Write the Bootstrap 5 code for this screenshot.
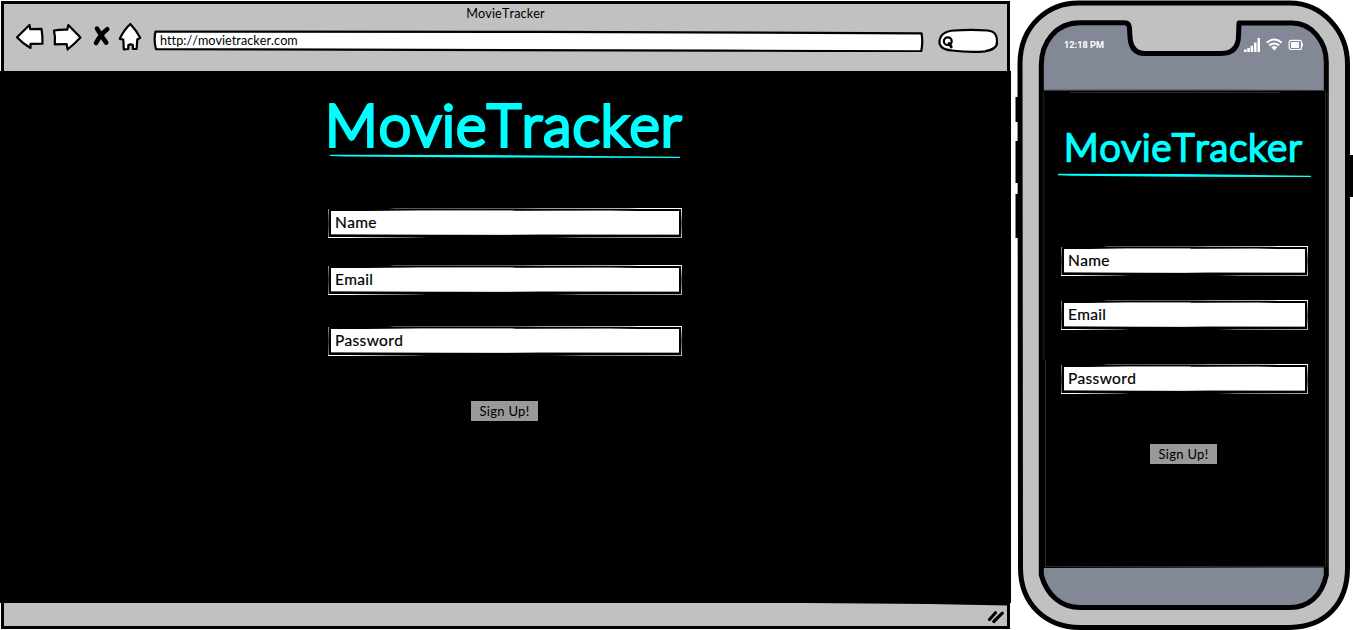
<!DOCTYPE html>
<html lang="en">
<head>
<meta charset="utf-8">
<meta name="viewport" content="width=device-width, initial-scale=1">
<title>MovieTracker</title>
<link href="https://cdn.jsdelivr.net/npm/bootstrap@5.3.0/dist/css/bootstrap.min.css" rel="stylesheet">
<style>
  body { width: 1353px; height: 630px; overflow: hidden; background: #fff; color: #000; font-family: Lato, "Open Sans", sans-serif; font-kerning: none; }
  svg { display: block; }
  .browser { width: 1011px; height: 630px; padding-top: 1px; }
  .chrome { height: 70px; margin: 0 1px 0 1px; background: #c1c1c1; border: 3px solid #000; border-bottom: 0; }
  .chrome-title { font-size: 12.6px; line-height: 20px; height: 18px; letter-spacing: .15px; }
  .chrome-nav { padding-left: 10px; height: 34px; }
  .page { height: 532px; background: #000; }
  .foot { height: 26px; margin: 0 1px; background: #c1c1c1; border: 3px solid #000; border-top: 0; }
  .address { width: 771px; height: 23px; margin: 7px 0 0 -1px; }
  .address span { left: 7px; top: 1px; font-size: 12.6px; line-height: 22px; letter-spacing: .04px; }
  .brand { color: #0ff; line-height: 1; font-weight: 300; white-space: nowrap; -webkit-text-stroke: 3.8px #0ff; }
  .brand-lg { font-size: 58px; height: 60px; margin: 24px 0 0 -3px; letter-spacing: 1px; }
  .brand-sm { font-size: 38px; height: 39px; margin: 36px 0 0 3px; letter-spacing: 1.05px; -webkit-text-stroke-width: 2.5px; }
  .rule-lg { margin-top: -2px; }
  .rule-sm { margin: 6px 0 0 -3px; }
  .field {
    height: 30px; padding: 0 0 0 7px; border: 0; border-radius: 0; color: #000;
    font-size: 15.5px; line-height: 28px; letter-spacing: .3px; -webkit-text-stroke: .2px #000;
    background:
      linear-gradient(#fff, #fff) 3px 3px / calc(100% - 6px) 23px no-repeat,
      linear-gradient(90deg, #000 10%, #999 26%, #999 52%, #333 53%, #777 80%, #000 88%) 3px 2px / calc(100% - 6px) 1px no-repeat,
      linear-gradient(90deg, #555, #bbb 30%, #ddd 50%, #888 60%, #aaa) 3px 26px / calc(100% - 6px) 1px no-repeat,
      linear-gradient(90deg, #000 17%, #555 19%, #666 54%, #999 60%, #bbb 85%, #fff 88%) 0 0 / 100% 1px no-repeat,
      linear-gradient(90deg, #fff 6%, #ccc 10%, #555 24%, #000 28%, #000 63%, #777 72%, #aaa) 0 29px / 100% 1px no-repeat,
      linear-gradient(#999, #333 50%, #888) 0 0 / 1px 100% no-repeat,
      linear-gradient(#fff, #555 50%, #ccc) 100% 0 / 1px 100% no-repeat,
      #000;
  }
  .sign { width: 67px; height: 20px; padding: 0; border: 0; border-radius: 0; background: #999 !important; color: #000 !important; font-size: 13px; line-height: 20px; letter-spacing: .3px; }
  .desk-form { width: 354px; margin-left: 328px; }
  .phone { width: 342px; height: 630px; }
  .shell { left: 0; top: 0; }
  .phone-ui { z-index: 1; height: 630px; }
  .status { height: 91px; padding: 37px 49px 0 53px; color: #fff; }
  .clock { font: 700 9.2px/15px Roboto, sans-serif; }
  .phone-form { width: 247px; margin-left: 50px; }
</style>
</head>
<body class="d-flex">
<main class="browser flex-shrink-0">
  <header class="chrome">
    <div class="chrome-title text-center">MovieTracker</div>
    <nav class="chrome-nav d-flex">
      <svg width="140" height="34" viewBox="14 22 140 34" fill="#fff" stroke="#000" stroke-width="2.200" stroke-linejoin="round" stroke-linecap="round">
        <path d="M17 37.300 29.500 25l.8 4.200 11.200-.3q1.200 7 1 14.800l-12 .1v4.200Q22.500 43.500 17 37.300Z"/>
        <path d="M54 30.500q6-1.200 13.300-.9L68.300 25 80.500 37.600Q75 43.500 67.600 49.500L66.600 44l-11.800.4Q55.500 37 54 30.500Z"/>
        <path d="M97 28.600Q101 35.500 106.200 42.600M107.200 29.200Q100 35 96 43" fill="none" stroke-width="4.600"/>
        <path d="M130.300 24Q136.500 30.500 140.200 37.800L137.300 39.500l-.7 9.500h-3.700v-3.800q-2.400-1.600-4.600 0v3.800l-4.500.5-.5-10L119.800 38.800Q123.500 30.500 130.300 24Z"/>
      </svg>
      <div class="address position-relative">
        <svg width="771" height="23" viewBox="153 29 771 23"><path d="M155.500 31.500Q350 30.800 540 31.800T921.500 33.300Q923.200 42 921.200 51.300L720 50.600Q430 50 156 49.200 153.500 40 155.500 31.500Z" fill="#fff" stroke="#000" stroke-width="2.200" stroke-linejoin="round"/></svg>
        <span class="position-absolute">http://movietracker.com</span>
      </div>
      <svg class="ms-1" width="73" height="36" viewBox="928 22 73 36" fill="none" stroke="#000" stroke-width="2.200" stroke-linecap="round">
        <path d="M952 50.500C941 49.500 939 45 939.500 41c.7-6 6-10 15-10.500q16-1.200 33 0c8 .8 9.500 5 9.500 11 .5 6-4 8.500-12 9.800-12 1.200-23 .4-33-.8Z" fill="#fff"/>
        <circle cx="947.800" cy="41.300" r="3.900"/><path d="m949 43.500 2.300 3.400" stroke-width="2.800"/>
      </svg>
    </nav>
  </header>

  <section class="page overflow-hidden">
    <div class="desk-form d-flex flex-column">
      <h1 class="brand brand-lg mb-0">MovieTracker</h1>
      <svg class="rule-lg" width="354" height="6" viewBox="328 153 354 6"><path d="M330 154.800 480 155 680 156.800V158L480 157.400 345 156.600 330 156Z" fill="#0ff"/></svg>
      <label class="field form-control" style="margin-top:49px">Name</label>
      <label class="field form-control" style="margin-top:27px">Email</label>
      <label class="field form-control" style="margin-top:31px">Password</label>
      <button class="btn sign" style="margin:45px 0 0 143px">Sign Up!</button>
    </div>
  </section>

  <footer class="foot d-flex justify-content-end">
    <svg width="200" height="23" viewBox="808 603 200 23">
      <path d="M808 603H1008V605.600L930 604Z"/>
      <path d="m990.500 619.500 6-6.800M994.800 621.500l8.500-8.300" stroke="#000" stroke-width="3.200" stroke-linecap="round"/>
    </svg>
  </footer>
</main>

<aside class="phone position-relative flex-shrink-0">
  <svg class="shell position-absolute" width="342" height="630" viewBox="1011 0 342 630" stroke-linejoin="round">
    <path d="M1015.500 97h4v25h-4zM1015.500 141h4v42h-4zM1015.500 194h4v44h-4zM1349 155h5v42h-5z"/>
    <path d="M1020 64C1020 24 1050 3 1078 3H1290C1322 3 1347.500 31 1347.500 64V568C1347.500 604 1325 627 1290 627.500H1080C1046 627.500 1020.500 604 1020.500 568Z" fill="#c1c1c1" stroke="#000" stroke-width="5"/>
    <path d="M1041.300 65C1041.300 42 1056 22.800 1080 22.800H1124Q1129 22.500 1129.500 28L1130 37Q1131 53.500 1145 53.500H1221Q1238 53.500 1238.500 36L1239 23H1292C1312 23 1326.300 42 1326.300 62V575C1322 596 1308 607.500 1290 607.500H1080C1062 607.500 1047 596 1041.300 575Z" fill="#828895" stroke="#000" stroke-width="5"/>
    <path d="M1041 90.500H1328V567.500L1042 568Z"/>
    <path d="M1044 90.200 1200 90 1325 90.500M1043.800 92V360M1045.500 360V566M1328 92V566M1325.500 92V566M1070 92.500H1280M1045 566.500H1325" stroke="#333" stroke-width=".8" fill="none"/>
  </svg>
  <div class="phone-ui position-relative overflow-hidden">
    <div class="status d-flex justify-content-between">
      <span class="clock">12:18 PM</span>
      <svg width="60" height="16" viewBox="1244 37 60 16" fill="#fff">
        <path d="M1244 49.500h2.500V52H1244zM1247.300 48h2.500v4h-2.500zM1250.600 45.800h2.500V52h-2.500zM1254 42.500h2.500V52H1254zM1257.500 38h2.500v14h-2.500z"/>
        <g fill="none" stroke="#fff" stroke-width="2"><path d="M1266.700 42.700q7.600-6.400 15 0M1269.200 45.500q5-4 10 0"/></g>
        <path d="M1271.300 47.200q3-2.300 6 0L1274.300 50.500Z"/>
        <rect x="1289.200" y="40.300" width="12.300" height="9.200" rx="2" fill="none" stroke="#fff" stroke-width="1.200"/><rect x="1291" y="42" width="8" height="6"/><path d="M1302.200 42.500q2 2.300 0 4.800Z"/>
      </svg>
    </div>
    <div class="phone-form d-flex flex-column">
      <h2 class="brand brand-sm mb-0">MovieTracker</h2>
      <svg class="rule-sm" width="254" height="6" viewBox="1058 172 254 6"><path d="M1058 173.800 1180 174 1311 175.800V177L1180 176.700 1070 175.700 1058 175.200Z" fill="#0ff"/></svg>
      <label class="field form-control" style="margin-top:68px">Name</label>
      <label class="field form-control" style="margin-top:24px">Email</label>
      <label class="field form-control" style="margin-top:34px">Password</label>
      <button class="btn sign" style="margin:50px 0 0 89px">Sign Up!</button>
    </div>
  </div>
</aside>
<script src="https://cdn.jsdelivr.net/npm/bootstrap@5.3.0/dist/js/bootstrap.bundle.min.js"></script>
</body>
</html>
